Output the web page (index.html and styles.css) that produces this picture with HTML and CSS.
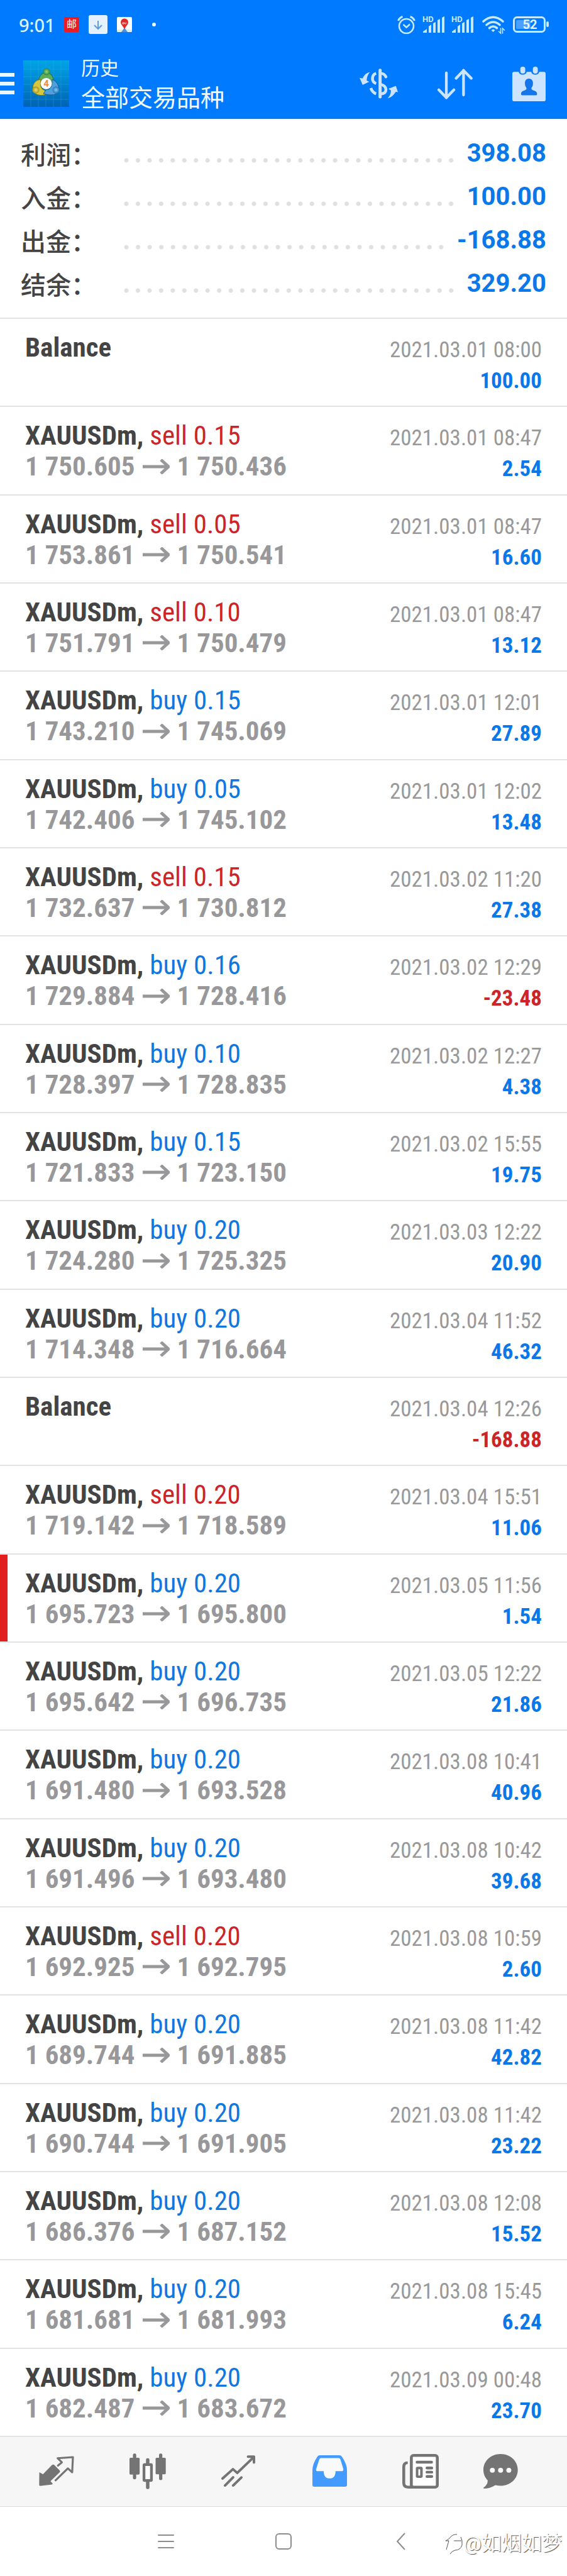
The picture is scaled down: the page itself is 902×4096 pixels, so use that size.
FILE: index.html
```html
<!DOCTYPE html>
<html lang="zh-CN">
<head>
    <meta charset="utf-8">
    <meta name="viewport" content="width=device-width, initial-scale=1">
    <title>历史</title>
    <link rel="stylesheet" href="styles.css">
</head>
<body>
    <header class="top">
        <div class="status">
            <span class="clock">9:01</span>
            <span class="mail">邮</span>
            <svg class="badge-down" viewBox="0 0 30 30"><rect width="30" height="30" rx="3" fill="#e6f1ff"/><path d="M15 9v13M9 16l6 6 6-6" fill="none" stroke="#5b9be0" stroke-width="2"/></svg>
            <svg class="badge-map" viewBox="0 0 24 24"><rect width="24" height="24" rx="2" fill="#fff"/><path d="M0 20h24v2q0 2-2 2H2q-2 0-2-2z" fill="#dff0e4"/><path d="M12 17l5 7H7z" fill="#4a90e2"/><path d="M12 19l-4-6a6 6 0 1 1 8 0z" fill="#e02a2a"/><circle cx="10" cy="10" r="1.3" fill="none" stroke="#fff" stroke-width=".8"/><path d="M12.6 8.6v2q1 1.2 2 0v-2" fill="none" stroke="#fff" stroke-width=".8"/></svg>
            <span class="dot"></span>
            <div class="status-right">
                <svg width="29" height="29" viewBox="0 0 29 29" fill="none" stroke="#c5eaff"><circle cx="14.500" cy="16.500" r="11.500" stroke-width="2.500"/><path d="M1.500 8q2-5 7-6.500M27.500 8q-2-5-7-6.500" stroke-width="3"/><path d="M9.500 14l5 4.500 5.500-5" stroke-width="2.500"/></svg>
                <svg width="35" height="32" viewBox="0 -3 35 32"><text x="0" y="9" class="hd">HD</text><path d="M1 26v-2l6-4v6zM10 26V16l4-3v13zM17 26V11l4-2v17zM24 26V6l4-2v22zM31 26V2l4-2v26z" fill="#c5eaff"/></svg>
                <svg width="35" height="32" viewBox="0 -3 35 32"><text x="0" y="9" class="hd">HD</text><path d="M1 26v-2l6-4v6zM10 26V16l4-3v13zM17 26V11l4-2v17zM24 26V6l4-2v22zM31 26V2l4-2v26z" fill="#c5eaff"/></svg>
                <svg class="wifi" width="35" height="28" viewBox="0 0 35 28" fill="none" stroke="#c5eaff" stroke-width="3.600" stroke-linecap="round"><path d="M2 9Q17.500-4.500 33 9M7 14.500q10.500-9 21 0M11.500 19.500q6-5 12 0"/><path d="M17.500 26l-3-3q3-3 6 0z" fill="#c5eaff" stroke="none"/><path d="M29.500 20v8l-3-3M32.500 28v-8l3 3" stroke-width="1.500"/></svg>
                <svg width="57" height="26" viewBox="0 0 57 26"><rect x="1.500" y="1.500" width="49" height="23" rx="5" fill="none" stroke="#c5eaff" stroke-width="3"/><rect x="5" y="6" width="23" height="14" rx="2" fill="#4a9fff"/><rect x="53" y="8" width="4" height="9" rx="2" fill="#c5eaff"/><text x="27" y="20" text-anchor="middle" class="battery">52</text></svg>
            </div>
        </div>
        <div class="appbar">
            <button class="menu" aria-label="菜单"><span></span><span></span><span></span></button>
            <svg class="logo" viewBox="0 0 73 74">
                <defs>
                    <linearGradient id="sky" x1="0" y1="0" x2="0" y2="1"><stop offset="0" stop-color="#00a5e6"/><stop offset="1" stop-color="#0062b4"/></linearGradient>
                    <radialGradient id="green"><stop offset="0" stop-color="#9bd27e"/><stop offset="1" stop-color="#2b8a3c"/></radialGradient>
                    <radialGradient id="gold"><stop offset="0" stop-color="#f0e27a"/><stop offset="1" stop-color="#a99518"/></radialGradient>
                    <radialGradient id="azure"><stop offset="0" stop-color="#8ccaf5"/><stop offset="1" stop-color="#2277bb"/></radialGradient>
                </defs>
                <rect width="73" height="74" fill="url(#sky)"/>
                <path d="M12 0v74M24 0v74M36 0v74M48 0v74M60 0v74M0 14h73M0 26h73M0 38h73M0 50h73M0 62h73" stroke="#3db5ea" stroke-opacity=".3"/>
                <path d="M24 37q0-16 12-18 13 2 13 18l-5 2q-8-10-15 0z" fill="#5eae58" stroke="#1f6d35"/>
                <path d="M28 30q-14 2-13 17 4 11 20 8v-7q-10-2-7-18z" fill="#d5c73e" stroke="#77700e"/>
                <path d="M46 30q11 5 11 18-5 11-25 5l4-6q11 0 10-17z" fill="#4e9fdc" stroke="#185b91"/>
                <circle cx="37" cy="18" r="5.500" fill="url(#green)"/>
                <circle cx="20" cy="47" r="5.500" fill="url(#gold)"/>
                <circle cx="52" cy="47" r="5.500" fill="url(#azure)"/>
                <circle cx="36.500" cy="37" r="9" fill="#fff"/>
                <text x="36.500" y="42" text-anchor="middle" class="logo-num">4</text>
            </svg>
            <div class="titles">
                <span class="section">历史</span>
                <h1>全部交易品种</h1>
            </div>
            <div class="actions">
                <button aria-label="品种"><svg width="61" height="48" viewBox="423 393 211 170" preserveAspectRatio="none"><g fill="none" stroke="#cce4ff" stroke-width="16"><path d="M536 402v151" stroke-width="17" stroke-linecap="round"/><path d="M514 420q-20 6-20 30 0 20 20 28M485 503q8 25 29 32"/><path d="M542 420q18 2 26 20" stroke-linecap="round"/><path d="M540 482q28 8 28 30 0 22-28 24"/></g><path d="M480 413q-26 3-41 36l-16-4 17 40 36-18-14-7q1-28 18-47zM578 560q26-5 44-36l12 2-11-36-42 17 14 8q2 25-17 45z" fill="#cce4ff"/></svg></button>
                <button aria-label="排序"><svg width="56" height="49" viewBox="847 393 195 177" preserveAspectRatio="none"><path d="M896 418v144M854 515l42 45 42-45M991 545V402M950 449l41-45 43 45" fill="none" stroke="#cce4ff" stroke-width="15" stroke-linecap="round" stroke-linejoin="round"/></svg></button>
                <button aria-label="时间段"><svg width="53" height="55" viewBox="1267 382 183 196" preserveAspectRatio="none"><path d="M1277 411h25q3 16 22 16t22-16h25q3 16 22 16t22-16h25q10 0 10 10v147q0 10-10 10h-163q-10 0-10-10V421q0-10 10-10z" fill="#cce4ff"/><rect x="1311" y="382" width="27" height="39" rx="13" fill="#cce4ff"/><rect x="1380" y="382" width="27" height="39" rx="13" fill="#cce4ff"/><path d="M1358 450c18 0 25 16 22 34 0 12-8 14-8 23 2 13 31 9 31 28 0 7-2 9-6 9h-76c-4 0-6-3-6-9 0-19 27-15 30-28 0-9-8-11-8-23-3-18 3-34 21-34z" fill="#1476e8"/></svg></button>
            </div>
        </div>
    </header>

    <dl class="summary">
        <div><dt>利润：</dt><dd>398.08</dd></div>
        <div><dt>入金：</dt><dd>100.00</dd></div>
        <div><dt>出金：</dt><dd>-168.88</dd></div>
        <div><dt>结余：</dt><dd>329.20</dd></div>
    </dl>

    <ul class="deals" id="deals"></ul>

    <nav class="tabs">
        <a href="#quotes" aria-label="行情"><svg width="56" height="50" viewBox="217 222 195 182" preserveAspectRatio="none"><path d="M219 320l20 12 50-54q7-5 13 0l30 32q4 5 0 10l-51 52 12 14-3 5-66 8q-6 0-6-5z" fill="#747474"/><path d="M322 282l22-19-24-24 85-6-4 88-24-23-68 69" fill="none" stroke="#747474" stroke-width="11" stroke-linejoin="round" stroke-linecap="round"/></svg></a>
        <a href="#chart" aria-label="图表"><svg width="58" height="57" viewBox="716 209 201 205" preserveAspectRatio="none"><g fill="#747474"><rect x="716" y="234" width="56" height="96" rx="6"/><rect x="735" y="210" width="18" height="147" rx="8"/><rect x="860" y="234" width="56" height="95" rx="6"/><rect x="879" y="210" width="18" height="152" rx="8"/><rect x="807" y="237" width="19" height="40" rx="8"/><rect x="807" y="365" width="19" height="48" rx="8"/></g><rect x="796" y="273" width="41" height="91" rx="3" fill="#fff" stroke="#747474" stroke-width="15"/></svg></a>
        <a href="#trade" aria-label="交易"><svg width="54" height="50" viewBox="1224 218 189 181" preserveAspectRatio="none"><path d="M1231 352l58-54 24 22 92-92M1373 226h33v34M1245 392l45-47M1290 392l46-46" fill="none" stroke="#747474" stroke-width="14" stroke-linecap="round" stroke-linejoin="round"/></svg></a>
        <a href="#history" aria-label="历史"><svg width="55" height="50" viewBox="158 218 193 181" preserveAspectRatio="none"><path d="M200 218h108q10 0 15 9 28 42 28 77v85q0 10-10 10H168q-10 0-10-10v-85q0-35 27-77 5-9 15-9z" fill="#439bff"/><path d="M205 234h100q6 0 9 7l16 54q3 14-5 14h-38q0 42-33 42t-33-42h-37q-8 0-5-11l17-56q3-8 9-8z" fill="#f9f9f9"/></svg></a>
        <a href="#news" aria-label="新闻"><svg width="58" height="55" viewBox="656 210 202 198" preserveAspectRatio="none"><g fill="none" stroke="#747474" stroke-width="16"><rect x="706" y="218" width="144" height="182" rx="12" fill="#fff"/><path d="M686 260q-22 0-22 24v92q0 24 24 24h30"/><path d="M738 257h80M793 290h26M793 314h26M793 339h26" stroke-linecap="round"/><rect x="738" y="290" width="24" height="50" rx="3" stroke-width="14"/></g></svg></a>
        <a href="#chat" aria-label="消息"><svg width="55" height="55" viewBox="1103 210 193 198" preserveAspectRatio="none"><path d="M1199 210c54 0 96 40 96 91s-42 91-96 91q-15 0-29-4-31 20-65 20-3-2 0-6 23-17 22-41c-15-16-24-36-24-60 0-51 42-91 96-91z" fill="#747474"/><circle cx="1153" cy="303" r="14" fill="#fff"/><circle cx="1199" cy="303" r="14" fill="#fff"/><circle cx="1245" cy="303" r="14" fill="#fff"/></svg></a>
    </nav>

    <footer class="system">
        <button aria-label="最近任务"><svg width="26" height="24" viewBox="0 0 26 24"><path d="M1 2h24M1 12h24M1 22h24" stroke="#8c8c8c" stroke-width="2" stroke-linecap="round"/></svg></button>
        <button aria-label="主屏幕"><svg width="28" height="28" viewBox="0 0 28 28"><rect x="2" y="2" width="24" height="24" rx="5" fill="none" stroke="#8c8c8c" stroke-width="2"/></svg></button>
        <button aria-label="返回"><svg width="16" height="28" viewBox="0 0 16 28"><path d="M14 1L2 14l12 13" fill="none" stroke="#8c8c8c" stroke-width="2"/></svg></button>
        <div class="watermark">
            <svg width="27" height="36" viewBox="0 0 27 36" fill="none" stroke="#555"><path d="M1 28l4-14H0q4-2 6-4 5-7 12-6M24 8q3 5 2 13-3 8-11 8-5 1-8 6M13 14h12"/></svg>
            <span>@如烟如梦</span>
        </div>
    </footer>

    <svg class="symbols" aria-hidden="true">
        <symbol id="arrow" viewBox="0 0 43 24"><path d="M0 12h40M29 1l12 11-12 11" fill="none" stroke="#98989b" stroke-width="5"/></symbol>
    </svg>

    <script>
        // type, volume, open, close, time, profit
        const deals = [
            ["balance", "", "", "", "2021.03.01 08:00", "100.00"],
            ["sell", "0.15", "1 750.605", "1 750.436", "2021.03.01 08:47", "2.54"],
            ["sell", "0.05", "1 753.861", "1 750.541", "2021.03.01 08:47", "16.60"],
            ["sell", "0.10", "1 751.791", "1 750.479", "2021.03.01 08:47", "13.12"],
            ["buy", "0.15", "1 743.210", "1 745.069", "2021.03.01 12:01", "27.89"],
            ["buy", "0.05", "1 742.406", "1 745.102", "2021.03.01 12:02", "13.48"],
            ["sell", "0.15", "1 732.637", "1 730.812", "2021.03.02 11:20", "27.38"],
            ["buy", "0.16", "1 729.884", "1 728.416", "2021.03.02 12:29", "-23.48"],
            ["buy", "0.10", "1 728.397", "1 728.835", "2021.03.02 12:27", "4.38"],
            ["buy", "0.15", "1 721.833", "1 723.150", "2021.03.02 15:55", "19.75"],
            ["buy", "0.20", "1 724.280", "1 725.325", "2021.03.03 12:22", "20.90"],
            ["buy", "0.20", "1 714.348", "1 716.664", "2021.03.04 11:52", "46.32"],
            ["balance", "", "", "", "2021.03.04 12:26", "-168.88"],
            ["sell", "0.20", "1 719.142", "1 718.589", "2021.03.04 15:51", "11.06"],
            ["buy", "0.20", "1 695.723", "1 695.800", "2021.03.05 11:56", "1.54", "marked"],
            ["buy", "0.20", "1 695.642", "1 696.735", "2021.03.05 12:22", "21.86"],
            ["buy", "0.20", "1 691.480", "1 693.528", "2021.03.08 10:41", "40.96"],
            ["buy", "0.20", "1 691.496", "1 693.480", "2021.03.08 10:42", "39.68"],
            ["sell", "0.20", "1 692.925", "1 692.795", "2021.03.08 10:59", "2.60"],
            ["buy", "0.20", "1 689.744", "1 691.885", "2021.03.08 11:42", "42.82"],
            ["buy", "0.20", "1 690.744", "1 691.905", "2021.03.08 11:42", "23.22"],
            ["buy", "0.20", "1 686.376", "1 687.152", "2021.03.08 12:08", "15.52"],
            ["buy", "0.20", "1 681.681", "1 681.993", "2021.03.08 15:45", "6.24"],
            ["buy", "0.20", "1 682.487", "1 683.672", "2021.03.09 00:48", "23.70"]
        ];

        document.getElementById("deals").innerHTML = deals.map(function([type, volume, open, close, time, profit, mark]) {
            const left = type === "balance"
                ? `<div class="symbol">Balance</div>`
                : `<div class="symbol">XAUUSDm, <span class="${type}">${type} ${volume}</span></div>
                   <div class="prices">${open}<svg class="arrow"><use href="#arrow"/></svg>${close}</div>`;
            return `<li class="deal ${mark || ""}">
                <div class="left">${left}</div>
                <div class="right">
                    <time>${time}</time>
                    <div class="profit ${profit[0] === "-" ? "loss" : ""}">${profit}</div>
                </div>
            </li>`;
        }).join("");
    </script>
</body>
</html>
```
FILE: styles.css
```css
* {
    box-sizing: border-box;
}

body {
    margin: 0;
    min-height: 100vh;
    display: flex;
    flex-direction: column;
    background: #fff;
    color: #444;
    font-family: Roboto, "Noto Sans CJK SC", sans-serif;
}

button {
    padding: 0;
    border: 0;
    background: none;
}

svg {
    display: block;
}

.top {
    background: #007aff;
    border-bottom: 1px solid #1a6bc8;
    color: #e9f6ff;
}

.status {
    display: flex;
    align-items: center;
    height: 78px;
    padding: 0 29px 0 30px;
}

.clock {
    width: 72px;
    font: 500 29px "Noto Sans", sans-serif;
    color: #d8f2ff;
}

.mail {
    width: 24px;
    height: 24px;
    border-radius: 2px;
    background: #ea1c24;
    color: #fff;
    font-size: 16px;
    line-height: 23px;
    text-align: center;
}

.badge-down {
    width: 30px;
    margin: 0 15px;
}

.badge-map {
    width: 24px;
}

.dot {
    width: 6px;
    height: 6px;
    margin-left: 32px;
    border-radius: 50%;
    background: #e9fcff;
}

.status-right {
    display: flex;
    align-items: center;
    gap: 11px;
    margin-left: auto;
}

.wifi {
    margin: 0 3px;
    overflow: visible;
}

.battery {
    font: bold 20px Roboto, sans-serif;
    fill: #e6f7ff;
}

.hd {
    font: bold 13px Roboto, sans-serif;
    fill: #c5eaff;
}

.appbar {
    display: flex;
    align-items: center;
    height: 110px;
    padding: 0 34px 0 0;
}

.menu {
    display: flex;
    flex-direction: column;
    gap: 8px;
    margin-right: 14px;
}

.menu span {
    width: 23px;
    height: 6px;
    background: #e6f7ff;
}

.logo {
    width: 73px;
    margin-right: 19px;
}

.logo-num {
    font: bold 15px Roboto, sans-serif;
    fill: #f08a3c;
}

.titles {
    color: #f0faff;
}

.section {
    display: block;
    font-size: 30px;
    line-height: 46px;
}

h1 {
    margin: 0;
    font-size: 38px;
    font-weight: 400;
    line-height: 48px;
}

.actions {
    display: flex;
    align-items: center;
    gap: 63px;
    margin-left: auto;
}

.summary {
    margin: 0;
    padding: 20px 33px;
    border-bottom: 2px solid #e3e3e3;
}

.summary div {
    display: flex;
    align-items: center;
    height: 69px;
}

.summary dt {
    width: 159px;
    font-size: 40px;
    font-weight: 500;
}

/* dotted leader between the label and the value */
.summary div::before {
    content: "";
    order: 1;
    flex: 1;
    height: 30px;
    margin-right: 16px;
    background: radial-gradient(circle at 9px 26px, #e0e0e0 3px, transparent 4px) 0 0 / 18px 30px space no-repeat;
}

.summary dd {
    order: 2;
    margin: 0;
    font-size: 40px;
    font-weight: 700;
    color: #0b78ea;
}

.deals {
    flex: 1;
    display: flex;
    flex-direction: column;
    margin: 0;
    padding: 0;
    list-style: none;
    font-family: "Roboto Condensed", "Liberation Sans Narrow", Roboto, sans-serif;
}

.deal {
    flex: 1;
    display: flex;
    justify-content: space-between;
    padding: 21px 40px 12px;
    border-bottom: 2px solid #e3e3e3;
}

.marked {
    background: linear-gradient(#e21f1f, #e21f1f) no-repeat 0 0 / 12px 100%;
}

.symbol,
.prices {
    font-size: 43px;
    line-height: 49px;
    font-weight: 700;
}

.symbol span {
    font-weight: 400;
}

.prices {
    display: flex;
    align-items: center;
    color: #98989b;
}

.arrow {
    width: 43px;
    height: 24px;
    margin: 0 12px;
}

.right {
    padding-top: 4px;
    text-align: right;
    font-size: 35px;
    line-height: 49px;
}

time {
    display: block;
    color: #999;
}

.profit {
    font-weight: 700;
    color: #0b78ea;
}

.buy {
    color: #1177e0;
}

.sell,
.loss {
    color: #cc2428;
}

.tabs {
    display: grid;
    grid-template-columns: repeat(5, 1fr) 110px;
    height: 111px;
    padding: 0 51px 2px 18px;
    background: #f6f6f6;
    border-bottom: 1px solid #e0e0e0;
}

.tabs a {
    display: flex;
    align-items: center;
    justify-content: center;
}

.system {
    position: relative;
    display: flex;
    justify-content: center;
    height: 110px;
}

.system button {
    width: 187px;
    display: flex;
    align-items: center;
    justify-content: center;
}

.watermark {
    position: absolute;
    right: 8px;
    bottom: 32px;
    display: flex;
    align-items: center;
    gap: 1px;
    color: #fff;
    font-size: 32px;
    line-height: 40px;
    text-shadow: 1px 1px 1px #555;
}

.symbols {
    position: absolute;
    width: 0;
    height: 0;
}
```
